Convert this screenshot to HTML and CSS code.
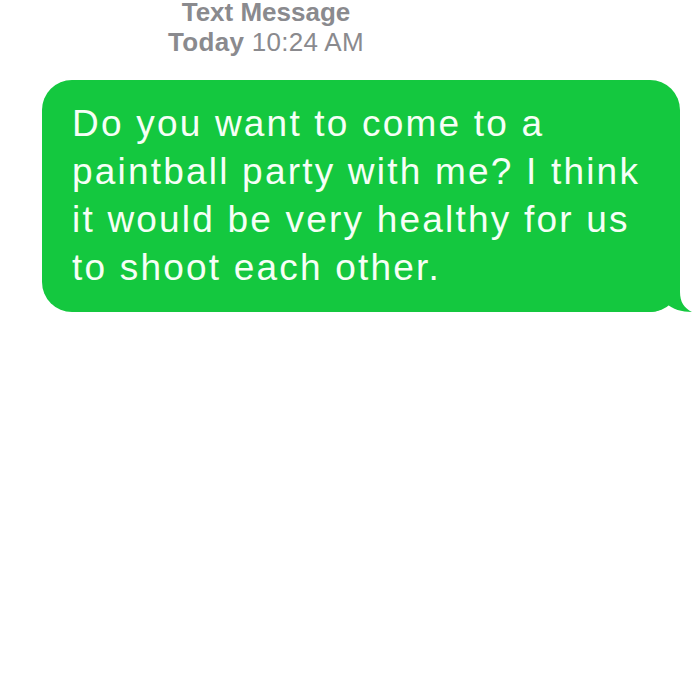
FILE: index.html
```html
<!DOCTYPE html>
<html lang="en">
<head>
    <meta charset="UTF-8">
    <title>Text Message</title>
    <link rel="stylesheet" href="styles.css">
</head>
<body>
    <div class="thread">
        <div class="thread-header">
            <div class="thread-kind">Text Message</div>
            <div class="thread-time"><b>Today</b> 10:24 AM</div>
        </div>
        <div class="bubble-row">
            <div class="bubble">
                <p class="bubble-text">Do you want to come to a paintball party with me? I think it would be very healthy for us to shoot each other.</p>
                <svg class="bubble-tail" width="42" height="30" viewBox="0 0 42 30">
                    <path d="M0 30 C8 30 14 26 17 22 C22 27 32 30 42 30 C34 26 30 20 30 10 L30 0 L0 0 Z" fill="#14c83f"/>
                </svg>
            </div>
        </div>
    </div>
</body>
</html>
```

FILE: styles.css
```css
body, html {
    margin: 0;
    padding: 0;
    background: #fff;
    font-family: 'Liberation Sans', Arial, sans-serif;
}
.thread {
    width: 700px;
    height: 700px;
    overflow: hidden;
}
.thread-header {
    text-align: center;
    color: #8a8a8e;
    font-size: 26px;
    line-height: 30px;
    margin-top: -3px;
    padding-right: 168px;
}
.thread-kind {
    font-weight: bold;
}
.thread-time {
    letter-spacing: 0.3px;
}
.thread-time b {
    font-weight: bold;
}
.bubble-row {
    padding: 23px 20px 0 42px;
}
.bubble {
    position: relative;
    background-color: #14c83f;
    color: #f6fff6;
    border-radius: 30px;
    padding: 20px 30px 20px 30px;
}
.bubble-text {
    margin: 0;
    font-size: 37px;
    line-height: 48px;
    letter-spacing: 2.2px;
}
.bubble-tail {
    position: absolute;
    right: -12px;
    bottom: 0;
}
```
